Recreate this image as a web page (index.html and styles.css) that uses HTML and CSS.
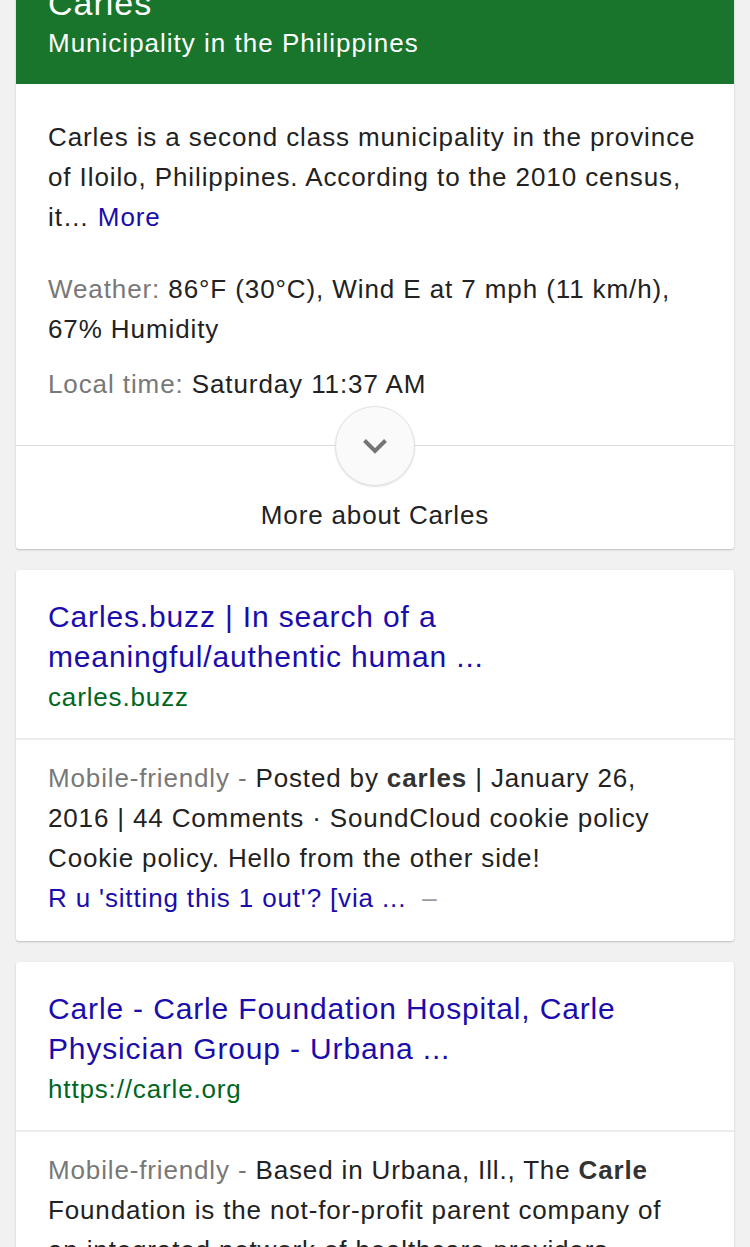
FILE: index.html
```html
<!DOCTYPE html>
<html>
<head>
<meta charset="utf-8">
<link rel="stylesheet" href="styles.css">
</head>
<body>
<div class="page">
  <div class="card kp">
    <div class="kp-head">
      <div class="kp-title">Carles</div>
      <div class="kp-sub">Municipality in the Philippines</div>
    </div>
    <div class="kp-body">
      <p class="desc">Carles is a second class municipality in the province of Iloilo, Philippines. According to the 2010 census, it… <a class="link">More</a></p>
      <p class="fact"><span class="label">Weather:</span> 86°F (30°C), Wind E at 7 mph (11 km/h), 67% Humidity</p>
      <p class="fact time"><span class="label">Local time:</span> Saturday 11:37 AM</p>
    </div>
    <div class="kp-more">
      <div class="chev">
        <svg width="26" height="16" viewBox="0 0 26 16"><path d="M2.5 2.5 L13 13 L23.5 2.5" fill="none" stroke="#757575" stroke-width="4"/></svg>
      </div>
      <div class="more-text">More about Carles</div>
    </div>
  </div>

  <div class="card result">
    <div class="r-head">
      <div class="r-title">Carles.buzz | In search of a meaningful/authentic human ...</div>
      <div class="r-url">carles.buzz</div>
    </div>
    <div class="r-body">
      <span class="label">Mobile-friendly - </span>Posted by <b>carles</b> | January 26, 2016 | 44 Comments · SoundCloud cookie policy Cookie policy. Hello from the other side!<br>
      <a class="link">R u 'sitting this 1 out'? [via ...</a> <span class="dash">–</span>
    </div>
  </div>

  <div class="card result">
    <div class="r-head">
      <div class="r-title">Carle - Carle Foundation Hospital, Carle Physician Group - Urbana ...</div>
      <div class="r-url">https://carle.org</div>
    </div>
    <div class="r-body">
      <span class="label">Mobile-friendly - </span>Based in Urbana, Ill., The <b>Carle</b> Foundation is the not-for-profit parent company of an integrated network of healthcare providers.
    </div>
  </div>
</div>
</body>
</html>
```

FILE: styles.css
```css
html, body {
  margin: 0;
  padding: 0;
  background: #f1f1f1;
  font-family: "Liberation Sans", Arial, sans-serif;
  color: #222;
  overflow: hidden;
}
.page {
  display: flex;
  flex-direction: column;
  gap: 21px;
  padding: 0 16px;
  height: 1247px;
}
.card {
  background: #fff;
  border-radius: 3px;
  box-shadow: 0 1px 2px rgba(0,0,0,0.22);
  flex-shrink: 0;
}
.kp {
  margin-top: -39px;
}
.kp-head {
  background: #1a752c;
  color: #fff;
  padding: 20px 32px 23px;
  border-radius: 3px 3px 0 0;
}
.kp-title {
  font-size: 34px;
  line-height: 44px;
  letter-spacing: 1px;
}
.kp-sub {
  font-size: 26px;
  line-height: 36px;
  letter-spacing: 1px;
}
.kp-body {
  padding: 33px 32px 41px;
  font-size: 26px;
  line-height: 40px;
  letter-spacing: 0.9px;
}
.kp-body p { margin: 0; }
.kp-body .desc { margin-bottom: 32px; }
.kp-body .time { margin-top: 15px; }
.label { color: #787878; }
.link { color: #1a0dab; text-decoration: none; }
.kp-more {
  border-top: 1px solid #dcdcdc;
  display: flex;
  flex-direction: column;
  align-items: center;
  padding-bottom: 14px;
}
.chev {
  width: 78px;
  height: 78px;
  margin-top: -40px;
  border-radius: 50%;
  background: #fafafa;
  border: 1px solid #e2e2e2;
  box-shadow: 0 1px 2px rgba(0,0,0,0.12);
  display: flex;
  align-items: center;
  justify-content: center;
}
.chev svg { display: block; }
.more-text {
  margin-top: 9px;
  font-size: 26px;
  line-height: 40px;
  letter-spacing: 0.85px;
  color: #222;
}
.r-head {
  padding: 27px 32px 21px;
  border-bottom: 2px solid #ececec;
}
.r-title {
  font-size: 30px;
  line-height: 40px;
  letter-spacing: 0.85px;
  color: #1a0dab;
}
.r-url {
  font-size: 26px;
  line-height: 40px;
  letter-spacing: 0.85px;
  color: #006621;
}
.r-body {
  padding: 18px 40px 23px 32px;
  font-size: 26px;
  line-height: 40px;
  letter-spacing: 0.85px;
}
.r-body b { font-weight: bold; color: #333; }
.dash { color: #9a9a9a; margin-left: 8px; }
```
